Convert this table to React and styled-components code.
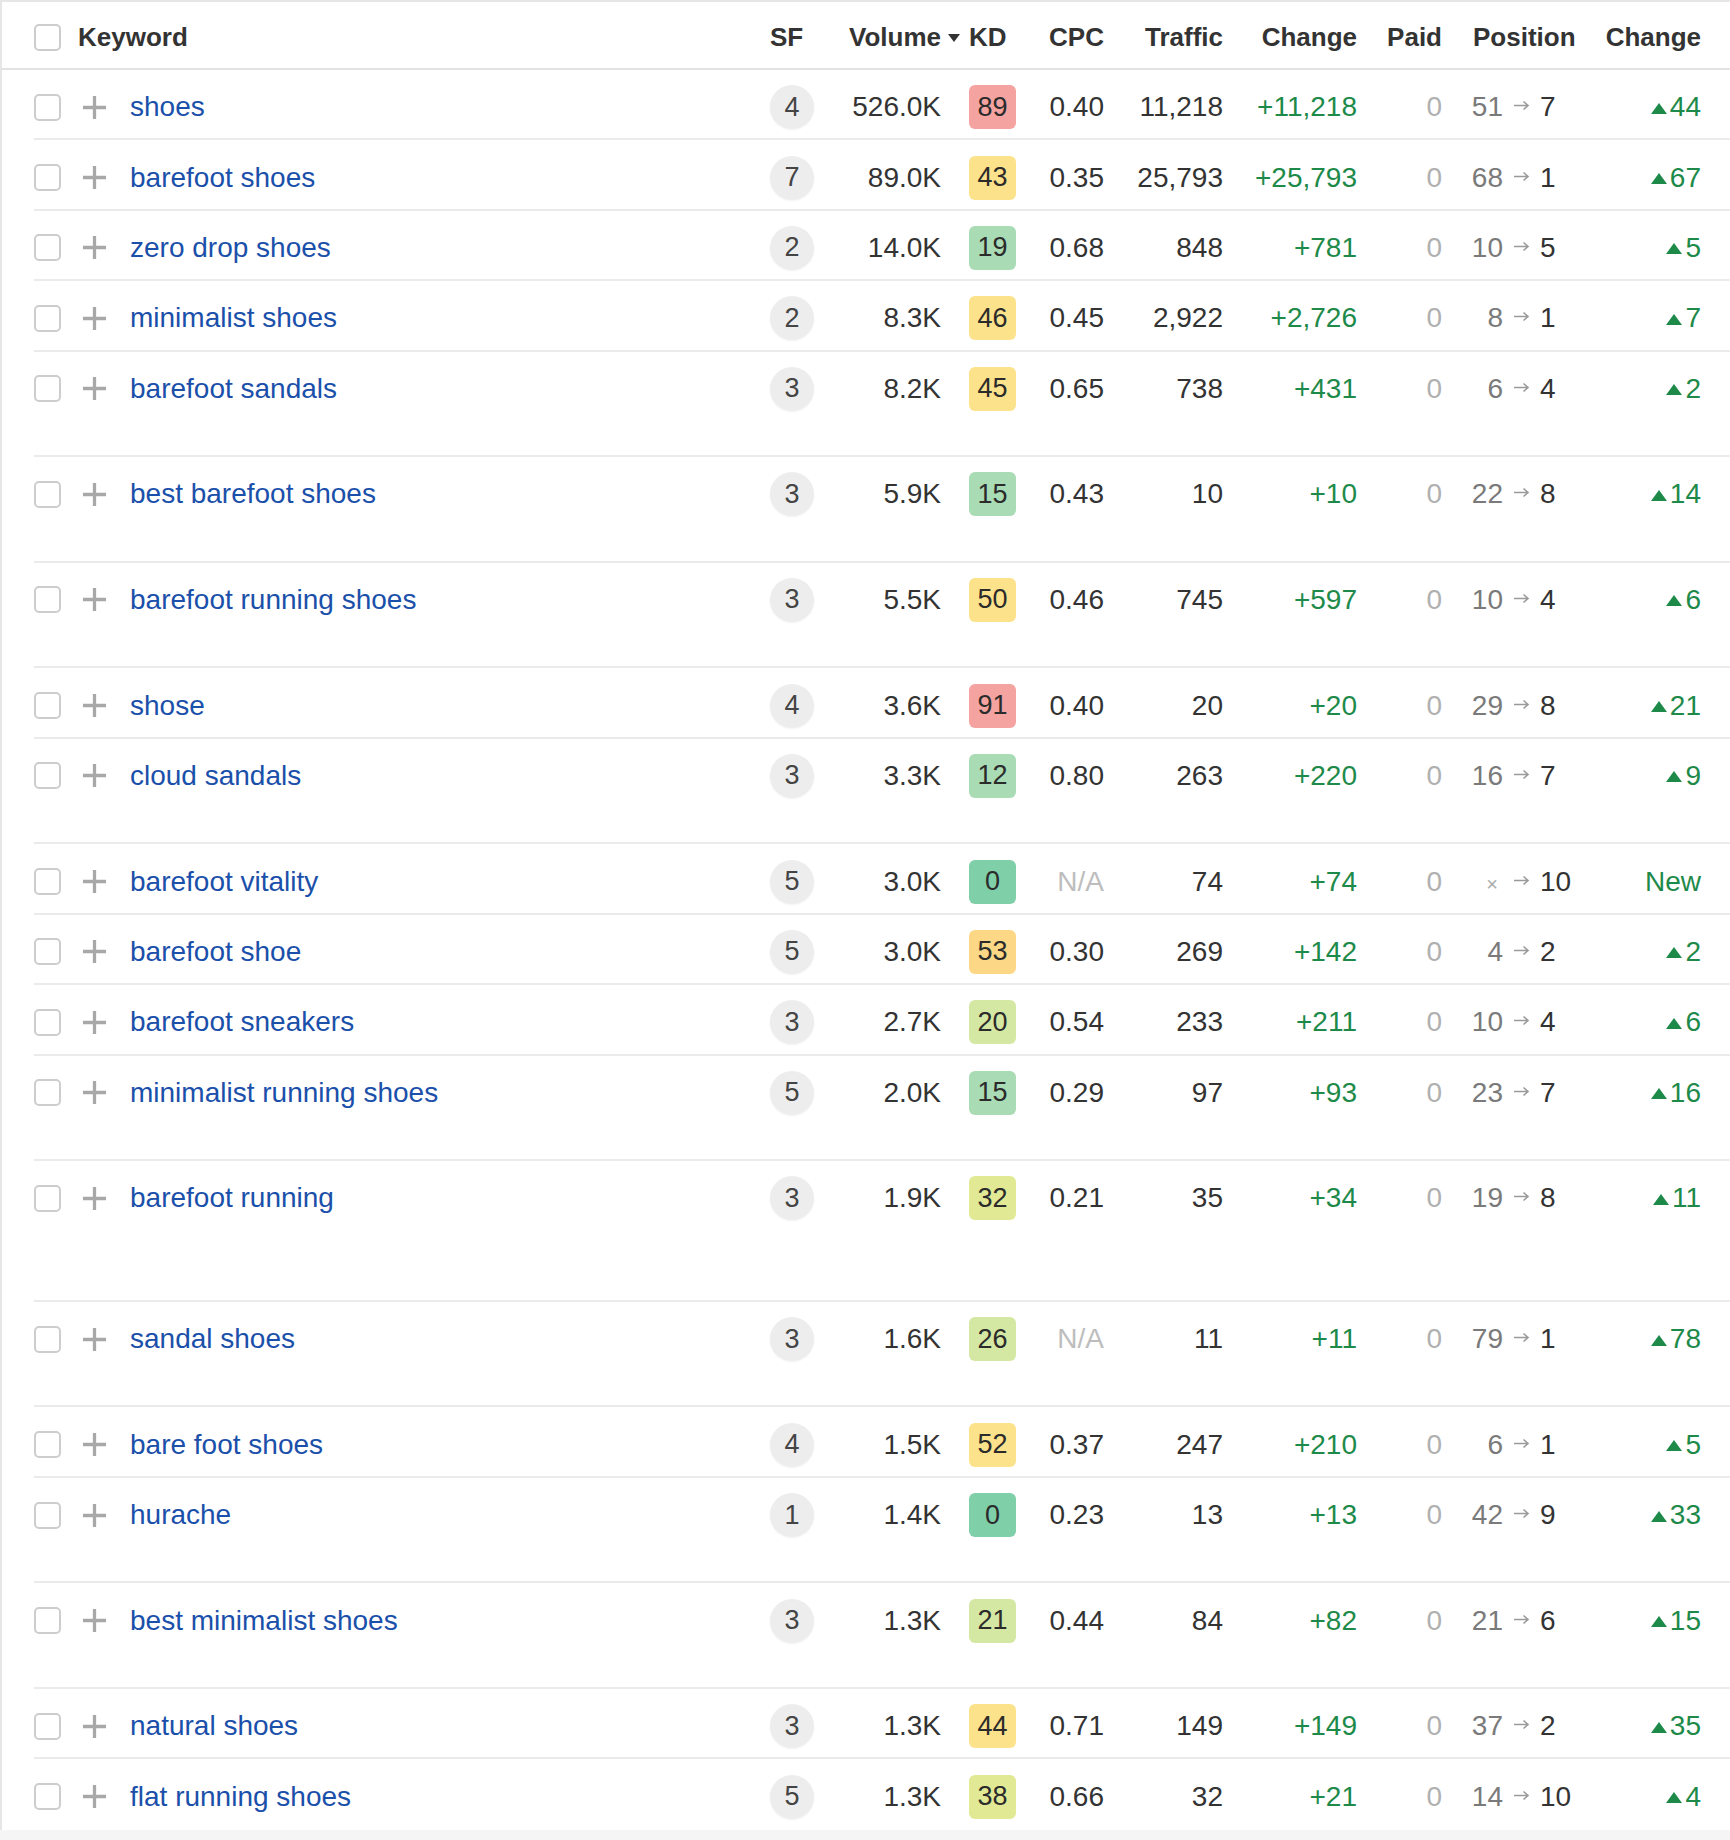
import React from "react";
import styled, { createGlobalStyle } from "styled-components";

const GlobalStyle = createGlobalStyle`
  html, body {
    margin: 0;
    padding: 0;
    background: #f5f5f5;
  }
  body {
    font-family: "Liberation Sans", Arial, Helvetica, sans-serif;
    color: #333;
  }
`;

const COLUMNS = "27px 69px 640px 44px 127px 75px 88px 119px 134px 85px 138px 121px";
const ROW_HEIGHT = 70.4;

const rows = [
  { kw: "shoes", sf: 4, vol: "526.0K", kd: 89, cpc: "0.40", traffic: "11,218", change: "+11,218", from: "51", to: "7", delta: "44" },
  { kw: "barefoot shoes", sf: 7, vol: "89.0K", kd: 43, cpc: "0.35", traffic: "25,793", change: "+25,793", from: "68", to: "1", delta: "67" },
  { kw: "zero drop shoes", sf: 2, vol: "14.0K", kd: 19, cpc: "0.68", traffic: "848", change: "+781", from: "10", to: "5", delta: "5" },
  { kw: "minimalist shoes", sf: 2, vol: "8.3K", kd: 46, cpc: "0.45", traffic: "2,922", change: "+2,726", from: "8", to: "1", delta: "7" },
  { kw: "barefoot sandals", sf: 3, vol: "8.2K", kd: 45, cpc: "0.65", traffic: "738", change: "+431", from: "6", to: "4", delta: "2", extra: 1 },
  { kw: "best barefoot shoes", sf: 3, vol: "5.9K", kd: 15, cpc: "0.43", traffic: "10", change: "+10", from: "22", to: "8", delta: "14", extra: 1 },
  { kw: "barefoot running shoes", sf: 3, vol: "5.5K", kd: 50, cpc: "0.46", traffic: "745", change: "+597", from: "10", to: "4", delta: "6", extra: 1 },
  { kw: "shose", sf: 4, vol: "3.6K", kd: 91, cpc: "0.40", traffic: "20", change: "+20", from: "29", to: "8", delta: "21" },
  { kw: "cloud sandals", sf: 3, vol: "3.3K", kd: 12, cpc: "0.80", traffic: "263", change: "+220", from: "16", to: "7", delta: "9", extra: 1 },
  { kw: "barefoot vitality", sf: 5, vol: "3.0K", kd: 0, cpc: null, traffic: "74", change: "+74", from: null, to: "10", delta: null },
  { kw: "barefoot shoe", sf: 5, vol: "3.0K", kd: 53, cpc: "0.30", traffic: "269", change: "+142", from: "4", to: "2", delta: "2" },
  { kw: "barefoot sneakers", sf: 3, vol: "2.7K", kd: 20, cpc: "0.54", traffic: "233", change: "+211", from: "10", to: "4", delta: "6" },
  { kw: "minimalist running shoes", sf: 5, vol: "2.0K", kd: 15, cpc: "0.29", traffic: "97", change: "+93", from: "23", to: "7", delta: "16", extra: 1 },
  { kw: "barefoot running", sf: 3, vol: "1.9K", kd: 32, cpc: "0.21", traffic: "35", change: "+34", from: "19", to: "8", delta: "11", extra: 2 },
  { kw: "sandal shoes", sf: 3, vol: "1.6K", kd: 26, cpc: null, traffic: "11", change: "+11", from: "79", to: "1", delta: "78", extra: 1 },
  { kw: "bare foot shoes", sf: 4, vol: "1.5K", kd: 52, cpc: "0.37", traffic: "247", change: "+210", from: "6", to: "1", delta: "5" },
  { kw: "hurache", sf: 1, vol: "1.4K", kd: 0, cpc: "0.23", traffic: "13", change: "+13", from: "42", to: "9", delta: "33", extra: 1 },
  { kw: "best minimalist shoes", sf: 3, vol: "1.3K", kd: 21, cpc: "0.44", traffic: "84", change: "+82", from: "21", to: "6", delta: "15", extra: 1 },
  { kw: "natural shoes", sf: 3, vol: "1.3K", kd: 44, cpc: "0.71", traffic: "149", change: "+149", from: "37", to: "2", delta: "35" },
  { kw: "flat running shoes", sf: 5, vol: "1.3K", kd: 38, cpc: "0.66", traffic: "32", change: "+21", from: "14", to: "10", delta: "4" },
];

const kdColor = (kd) => {
  if (kd < 10) return "#7fcfa9";
  if (kd < 20) return "#a9dbb5";
  if (kd < 30) return "#d5e8a3";
  if (kd < 40) return "#e2e994";
  if (kd < 53) return "#fde28c";
  if (kd < 70) return "#fcd886";
  return "#f5a3a0";
};

function App() {
  return (
    <>
      <GlobalStyle />
      <Table>
        <HeaderRow>
          <CheckBox />
          <KeywordHead>Keyword</KeywordHead>
          <HeadCell>SF</HeadCell>
          <HeadCell $align="end">
            Volume
            <Caret viewBox="0 0 12 8">
              <polygon points="0,0 12,0 6,8" fill="#333" />
            </Caret>
          </HeadCell>
          <HeadCell $pad={28}>KD</HeadCell>
          <HeadCell $align="end">CPC</HeadCell>
          <HeadCell $align="end">Traffic</HeadCell>
          <HeadCell $align="end">Change</HeadCell>
          <HeadCell $align="end">Paid</HeadCell>
          <HeadCell $pad={31}>Position</HeadCell>
          <HeadCell $align="end">Change</HeadCell>
        </HeaderRow>
        <Body>
          {rows.map((r) => (
            <Row key={r.kw} $extra={r.extra || 0}>
              <CheckBox />
              <Cell>
                <PlusIcon viewBox="0 0 26 26">
                  <path d="M13 1v24M1 13h24" stroke="#a8a8a8" strokeWidth="3.4" />
                </PlusIcon>
              </Cell>
              <Cell>
                <KeywordLink>{r.kw}</KeywordLink>
              </Cell>
              <Cell>
                <SerpBubble>{r.sf}</SerpBubble>
              </Cell>
              <Cell $align="end">{r.vol}</Cell>
              <Cell $align="end">
                <KdBadge $bg={kdColor(r.kd)}>{r.kd}</KdBadge>
              </Cell>
              <Cell $align="end" $muted={!r.cpc}>
                {r.cpc || "N/A"}
              </Cell>
              <Cell $align="end">{r.traffic}</Cell>
              <Cell $align="end" $green>
                {r.change}
              </Cell>
              <Cell $align="end" $faint>
                0
              </Cell>
              <Cell>
                <OldPos>{r.from ? r.from : <Cross>×</Cross>}</OldPos>
                <Arrow viewBox="0 0 17 11">
                  <path d="M1 5.5h14M10.5 1.5l4.5 4-4.5 4" stroke="#9a9a9a" strokeWidth="1.6" fill="none" />
                </Arrow>
                <NewPos>{r.to}</NewPos>
              </Cell>
              <Cell $align="end" $green>
                {r.delta ? (
                  <>
                    <Triangle viewBox="0 0 16 11">
                      <polygon points="0,11 8,0 16,11" fill="#1e8a4a" />
                    </Triangle>
                    {r.delta}
                  </>
                ) : (
                  "New"
                )}
              </Cell>
            </Row>
          ))}
        </Body>
      </Table>
    </>
  );
}

const Table = styled.div`
  width: 1730px;
  box-sizing: border-box;
  background: #fff;
  border-left: 2px solid #e6e6e6;
`;

const HeaderRow = styled.div`
  display: grid;
  grid-template-columns: 27px 709px 44px 127px 75px 88px 119px 134px 85px 138px 121px;
  align-items: center;
  box-sizing: border-box;
  height: 70px;
  padding: 4px 0 0 32px;
  border-top: 2px solid #e6e6e6;
  border-bottom: 2px solid #e2e2e2;
`;

const HeadCell = styled.div`
  display: flex;
  align-items: center;
  justify-content: ${(p) => (p.$align === "end" ? "flex-end" : "flex-start")};
  padding-left: ${(p) => p.$pad || 0}px;
  font-size: 26px;
  font-weight: 700;
  color: #333;
  white-space: nowrap;
`;

const KeywordHead = styled(HeadCell)`
  padding-left: 17px;
`;

const Caret = styled.svg`
  width: 12px;
  height: 8px;
  margin: 2px -19px 0 7px;
`;

const Body = styled.div`
  padding-left: 32px;
`;

const Row = styled.div`
  display: grid;
  grid-template-columns: ${COLUMNS};
  grid-template-rows: ${ROW_HEIGHT - 2}px;
  box-sizing: border-box;
  height: ${(p) => ROW_HEIGHT * (1 + p.$extra / 2)}px;
  padding-top: 3px;
  border-bottom: 2px solid #ebebeb;
  &:last-child {
    border-bottom: none;
  }
`;

const Cell = styled.div`
  display: flex;
  align-items: center;
  justify-content: ${(p) => (p.$align === "end" ? "flex-end" : "flex-start")};
  font-size: 28px;
  color: ${(p) => (p.$green ? "#1e8a4a" : p.$muted ? "#bdbdbd" : p.$faint ? "#b0b0b0" : "#333")};
  white-space: nowrap;
`;

const CheckBox = styled.span`
  align-self: center;
  display: block;
  width: 27px;
  height: 27px;
  box-sizing: border-box;
  border: 2px solid #cdcdcd;
  border-radius: 5px;
  background: #fff;
`;

const PlusIcon = styled.svg`
  width: 25px;
  height: 25px;
  margin-left: 21px;
`;

const KeywordLink = styled.a`
  color: #1b50aa;
  font-size: 28px;
  text-decoration: none;
  cursor: pointer;
`;

const SerpBubble = styled.span`
  display: flex;
  align-items: center;
  justify-content: center;
  width: 44px;
  height: 44px;
  border-radius: 50%;
  background: #ededed;
  box-shadow: 0 1px 2px rgba(0, 0, 0, 0.06);
  color: #444;
  font-size: 27px;
`;

const KdBadge = styled.span`
  display: flex;
  align-items: center;
  justify-content: center;
  width: 47px;
  height: 44px;
  border-radius: 6px;
  background: ${(p) => p.$bg};
  color: #2b2b2b;
  font-size: 27px;
`;

const OldPos = styled.span`
  width: 61px;
  text-align: right;
  color: #7a7a7a;
`;

const Cross = styled.span`
  font-size: 20px;
  color: #aaa;
  margin-right: 5px;
`;

const Arrow = styled.svg`
  width: 17px;
  height: 11px;
  margin: -3px 10px 0 10px;
`;

const NewPos = styled.span`
  color: #333;
`;

const Triangle = styled.svg`
  width: 16px;
  height: 11px;
  margin: 2px 3px 0 0;
`;

export default App;
